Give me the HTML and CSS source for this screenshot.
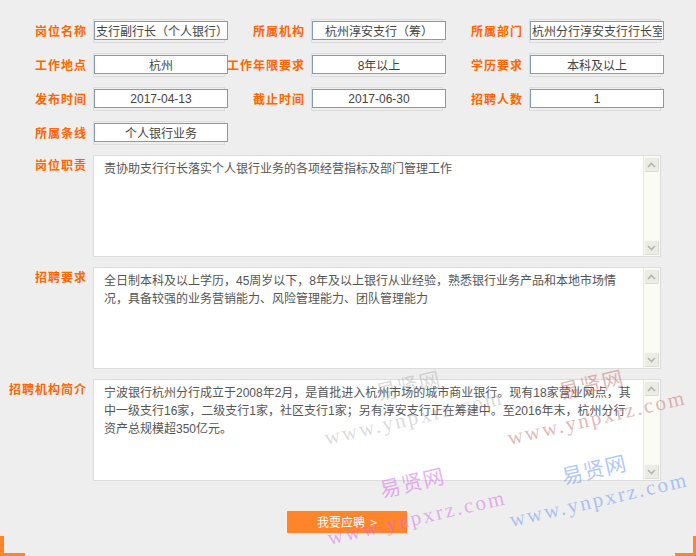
FILE: index.html
```html
<!DOCTYPE html>
<html lang="zh-CN">
<head>
<meta charset="utf-8">
<title>招聘岗位详情</title>
<link rel="stylesheet" href="styles.css">
</head>
<body>
<div class="page">
  <div class="fields">
    <div class="field"><span class="lbl">岗位名称</span><span class="cell"><input class="val" readonly value="支行副行长（个人银行）"></span></div>
    <div class="field"><span class="lbl">所属机构</span><span class="cell"><input class="val" readonly value="杭州淳安支行（筹）"></span></div>
    <div class="field"><span class="lbl">所属部门</span><span class="cell"><input class="val" readonly value="杭州分行淳安支行行长室"></span></div>
    <div class="field"><span class="lbl">工作地点</span><span class="cell"><input class="val" readonly value="杭州"></span></div>
    <div class="field"><span class="lbl">工作年限要求</span><span class="cell"><input class="val" readonly value="8年以上"></span></div>
    <div class="field"><span class="lbl">学历要求</span><span class="cell"><input class="val" readonly value="本科及以上"></span></div>
    <div class="field"><span class="lbl">发布时间</span><span class="cell"><input class="val" readonly value="2017-04-13"></span></div>
    <div class="field"><span class="lbl">截止时间</span><span class="cell"><input class="val" readonly value="2017-06-30"></span></div>
    <div class="field"><span class="lbl">招聘人数</span><span class="cell"><input class="val" readonly value="1"></span></div>
    <div class="field"><span class="lbl">所属条线</span><span class="cell"><input class="val" readonly value="个人银行业务"></span></div>
  </div>

  <div class="area-row">
    <span class="lbl top">岗位职责</span>
    <div class="area">
      <div class="area-text">责协助支行行长落实个人银行业务的各项经营指标及部门管理工作</div>
      <div class="sb">
        <div class="sb-btn"><svg width="9" height="6" viewBox="0 0 9 6"><polyline points="1,5 4.5,1.5 8,5" fill="none" stroke="#b4b4ac" stroke-width="1.6"/></svg></div>
        <div class="sb-track"></div>
        <div class="sb-btn"><svg width="9" height="6" viewBox="0 0 9 6"><polyline points="1,1 4.5,4.5 8,1" fill="none" stroke="#b4b4ac" stroke-width="1.6"/></svg></div>
      </div>
    </div>
  </div>

  <div class="area-row">
    <span class="lbl top">招聘要求</span>
    <div class="area">
      <div class="area-text">全日制本科及以上学历，45周岁以下，8年及以上银行从业经验，熟悉银行业务产品和本地市场情<br>况，具备较强的业务营销能力、风险管理能力、团队管理能力</div>
      <div class="sb">
        <div class="sb-btn"><svg width="9" height="6" viewBox="0 0 9 6"><polyline points="1,5 4.5,1.5 8,5" fill="none" stroke="#b4b4ac" stroke-width="1.6"/></svg></div>
        <div class="sb-track"></div>
        <div class="sb-btn"><svg width="9" height="6" viewBox="0 0 9 6"><polyline points="1,1 4.5,4.5 8,1" fill="none" stroke="#b4b4ac" stroke-width="1.6"/></svg></div>
      </div>
    </div>
  </div>

  <div class="area-row">
    <span class="lbl top">招聘机构简介</span>
    <div class="area">
      <div class="area-text">宁波银行杭州分行成立于2008年2月，是首批进入杭州市场的城市商业银行。现有18家营业网点，其<br>中一级支行16家，二级支行1家，社区支行1家；另有淳安支行正在筹建中。至2016年末，杭州分行<br>资产总规模超350亿元。</div>
      <div class="sb">
        <div class="sb-btn"><svg width="9" height="6" viewBox="0 0 9 6"><polyline points="1,5 4.5,1.5 8,5" fill="none" stroke="#b4b4ac" stroke-width="1.6"/></svg></div>
        <div class="sb-track"></div>
        <div class="sb-btn"><svg width="9" height="6" viewBox="0 0 9 6"><polyline points="1,1 4.5,4.5 8,1" fill="none" stroke="#b4b4ac" stroke-width="1.6"/></svg></div>
      </div>
    </div>
  </div>

  <div class="actions">
    <button class="apply" type="button">我要应聘&nbsp;&nbsp;&gt;</button>
  </div>

  <div class="corners">
    <span class="corner corner-l"></span>
    <span class="corner corner-r"></span>
  </div>

  <div class="wm wm-cn wm-gray" style="left:408px;top:385px">易贤网</div>
  <div class="wm wm-en wm-gray" style="left:414px;top:418px">www.ynpxrz.com</div>
  <div class="wm wm-cn wm-rose" style="left:591px;top:384px">易贤网</div>
  <div class="wm wm-en wm-rose" style="left:597px;top:418px">www.ynpxrz.com</div>
  <div class="wm wm-cn wm-violet" style="left:412px;top:482px">易贤网</div>
  <div class="wm wm-en wm-violet" style="left:417px;top:518px">www.ynpxrz.com</div>
  <div class="wm wm-cn wm-blue" style="left:594px;top:469px">易贤网</div>
  <div class="wm wm-en wm-blue" style="left:599px;top:500px">www.ynpxrz.com</div>
</div>
</body>
</html>
```

FILE: styles.css
```css
html, body {
  margin: 0;
  padding: 0;
  background: #eeeeee;
}

body {
  font-family: "Liberation Sans", "Noto Sans CJK SC", sans-serif;
  font-size: 12px;
  color: #555555;
}

.page {
  position: relative;
  width: 696px;
  height: 556px;
  overflow: hidden;
  padding-top: 19px;
  box-sizing: border-box;
}

.fields {
  display: grid;
  grid-template-columns: repeat(3, 218px);
  row-gap: 10px;
  padding-left: 7px;
}

.field {
  display: flex;
  align-items: center;
  height: 24px;
}

.lbl {
  flex: none;
  width: 86px;
  box-sizing: border-box;
  padding-right: 6px;
  text-align: right;
  font-family: "Noto Sans CJK SC", sans-serif;
  font-weight: 700;
  font-size: 12px;
  line-height: 18px;
  letter-spacing: 1px;
  color: #ff6600;
  white-space: nowrap;
}

.lbl.top {
  align-self: flex-start;
  padding-top: 1px;
}

.cell {
  display: block;
  width: 132px;
  height: 24px;
  box-sizing: border-box;
  border: 1px solid #dcdcdc;
  padding-top: 1px;
}

.val {
  display: block;
  width: 134px;
  height: 19px;
  margin: 0;
  box-sizing: border-box;
  border: 1px solid #7f9db9;
  padding: 0 1px;
  background: #ffffff;
  font-family: "Liberation Sans", "Noto Sans CJK SC", sans-serif;
  font-size: 12px;
  color: #444444;
  text-align: center;
  outline: none;
}

.area-row {
  display: flex;
  margin-top: 10px;
  padding-left: 7px;
}

.area {
  display: flex;
  width: 568px;
  height: 102px;
  box-sizing: border-box;
  border: 1px solid #dcdcdc;
  background: #ffffff;
}

.area-text {
  flex: 1;
  padding: 4px 10px;
  line-height: 18px;
  color: #555555;
  white-space: nowrap;
  overflow: hidden;
}

.sb {
  flex: none;
  display: flex;
  flex-direction: column;
  width: 17px;
  box-sizing: border-box;
  border-left: 1px solid #e8e8e0;
  background: #fbfbf5;
  padding: 1px 1px 1px 0;
}

.sb-btn {
  flex: none;
  height: 15px;
  display: flex;
  align-items: center;
  justify-content: center;
  box-sizing: border-box;
  border: 1px solid #f7f7f2;
  border-right-color: #dcdcd4;
  border-bottom-color: #dcdcd4;
  border-radius: 2px;
  background: #ecece6;
}

.sb-track {
  flex: 1;
}

.actions {
  display: flex;
  justify-content: center;
  padding-right: 2px;
  margin-top: 30px;
}

.apply {
  width: 120px;
  height: 22px;
  margin: 0;
  padding: 0;
  border: none;
  background: #ff842a;
  color: #ffffff;
  font-family: "Noto Sans CJK SC", sans-serif;
  font-size: 12px;
  line-height: 22px;
}

.corners {
  display: flex;
  justify-content: space-between;
  align-items: flex-end;
  margin-top: 3px;
  height: 20px;
}

.corner {
  display: block;
  height: 20px;
  box-sizing: border-box;
  border-bottom: 3px solid #ff842a;
}

.corner-l {
  width: 25px;
  border-left: 4px solid #ff842a;
}

.corner-r {
  width: 21px;
  border-right: 3px solid #ff842a;
}

.wm {
  position: absolute;
  transform: translate(-50%, -50%) rotate(-13deg);
  white-space: nowrap;
  pointer-events: none;
  line-height: 1;
}

.wm-cn {
  font-family: "Noto Sans CJK SC", serif;
  font-size: 21px;
  letter-spacing: 1px;
}

.wm-en {
  font-family: "Liberation Serif", serif;
  font-size: 21px;
  letter-spacing: 2.4px;
}

.wm-gray { color: rgba(150, 150, 150, 0.35); }
.wm-rose { color: rgba(200, 110, 110, 0.5); }
.wm-violet { color: rgba(215, 110, 235, 0.55); }
.wm-blue { color: rgba(100, 145, 240, 0.5); }
```
